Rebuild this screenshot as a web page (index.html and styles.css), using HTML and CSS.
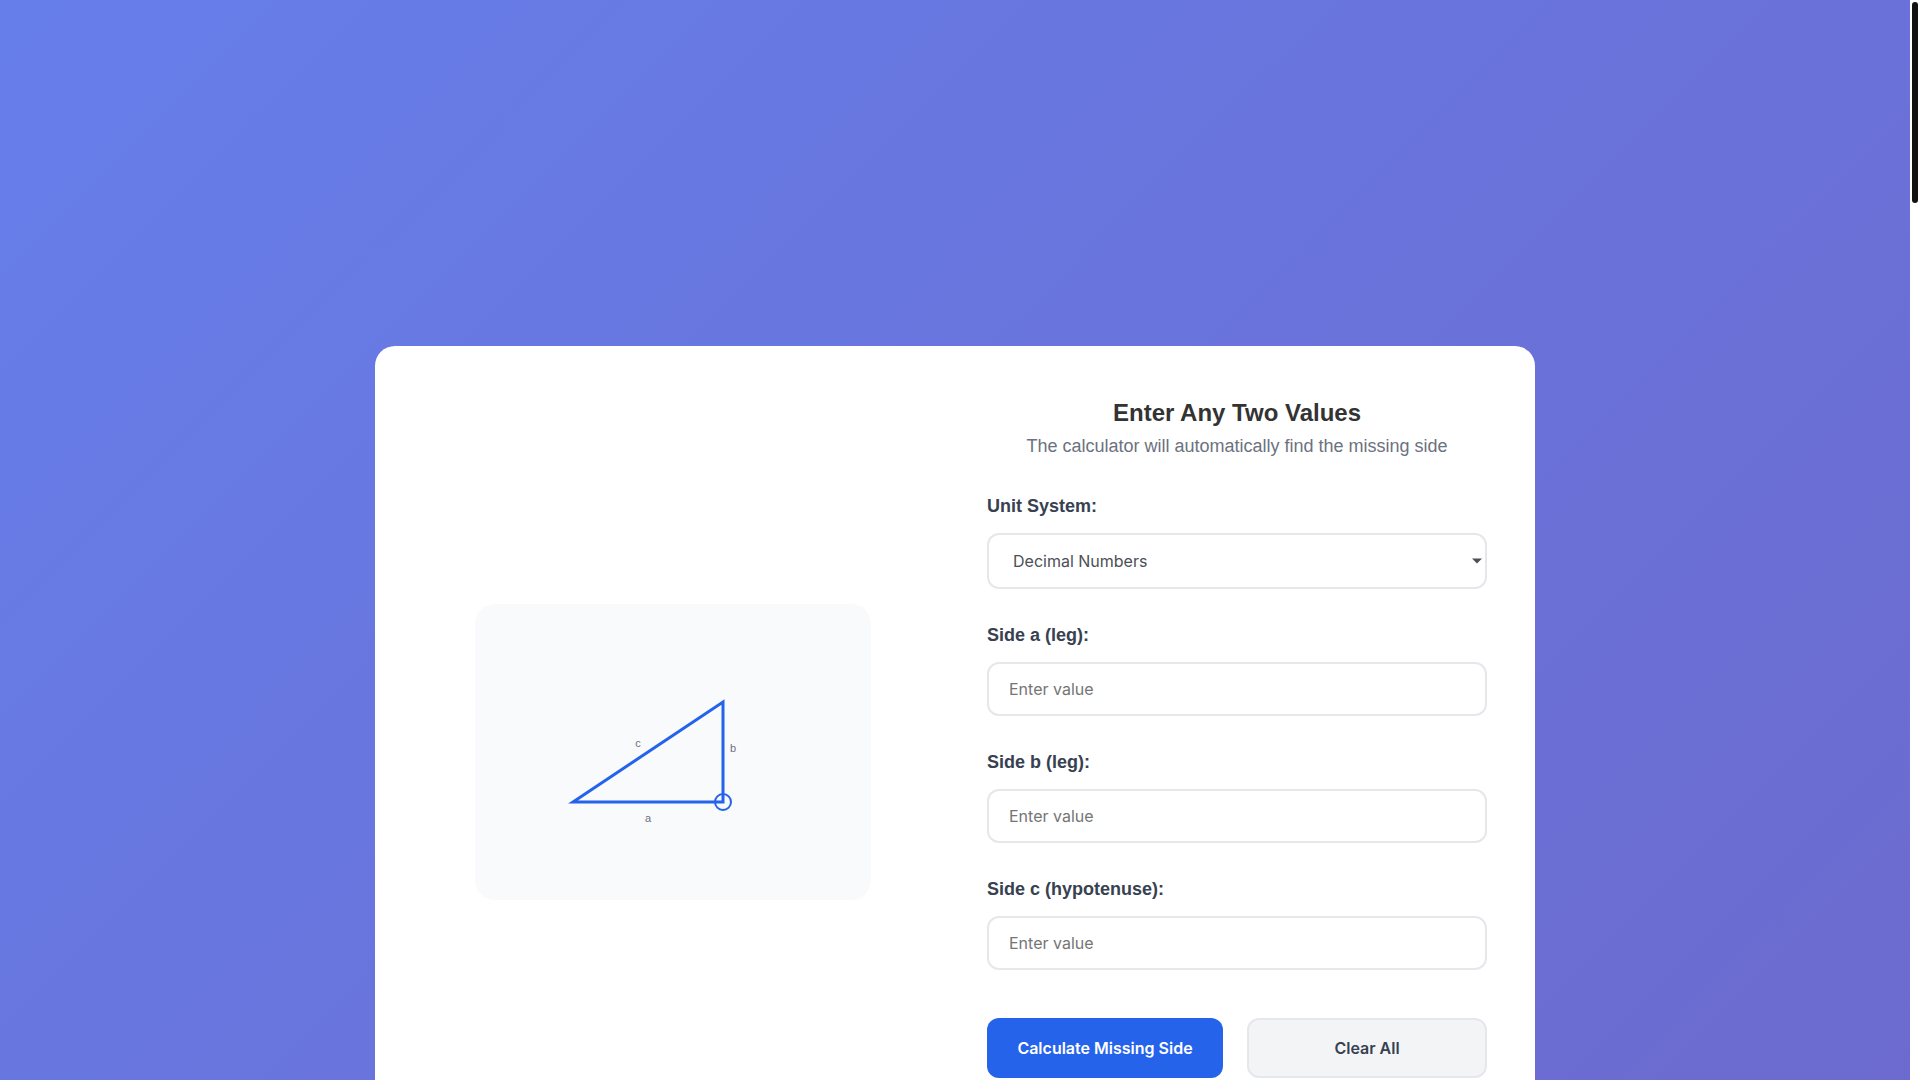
FILE: index.html
```html
<!DOCTYPE html>
<html lang="en">
<head>
    <meta charset="UTF-8">
    <meta name="viewport" content="width=device-width, initial-scale=1.0">
    <title>Right Triangle Calculator</title>
    <link rel="stylesheet" href="styles.css">
</head>
<body>
    <main class="page">
        <section class="calculator">
            <div class="visual">
                <div class="diagram">
                    <svg width="300" height="200" viewBox="0 0 300 200" role="img" aria-label="Right triangle">
                        <polygon class="triangle" points="50,150 200,150 200,50" />
                        <circle class="angle" cx="200" cy="150" r="8" />
                        <text class="side-label" x="125" y="170">a</text>
                        <text class="side-label" x="210" y="100">b</text>
                        <text class="side-label" x="115" y="95">c</text>
                    </svg>
                </div>
            </div>

            <form class="calc-form" id="calcForm">
                <div class="form-header">
                    <h2>Enter Any Two Values</h2>
                    <p>The calculator will automatically find the missing side</p>
                </div>

                <div class="input-group">
                    <label for="unitSystem">Unit System:</label>
                    <select id="unitSystem" name="unitSystem">
                        <option value="decimal">Decimal Numbers</option>
                    </select>
                </div>
                <div class="input-group">
                    <label for="sideA">Side a (leg):</label>
                    <input type="text" id="sideA" name="sideA" placeholder="Enter value">
                </div>
                <div class="input-group">
                    <label for="sideB">Side b (leg):</label>
                    <input type="text" id="sideB" name="sideB" placeholder="Enter value">
                </div>
                <div class="input-group">
                    <label for="sideC">Side c (hypotenuse):</label>
                    <input type="text" id="sideC" name="sideC" placeholder="Enter value">
                </div>

                <div class="button-group">
                    <button type="button" class="btn btn-primary">Calculate Missing Side</button>
                    <button type="reset" class="btn btn-secondary">Clear All</button>
                </div>
            </form>
        </section>
    </main>
    <div class="scroll-track"><div class="scroll-thumb"></div></div>
</body>
</html>
```

FILE: styles.css
```css
* {
    margin: 0;
    padding: 0;
    box-sizing: border-box;
}
body {
    height: 100vh;
    overflow: hidden;
    padding-right: 10px;
    font-family: "Liberation Sans", Arial, sans-serif;
    color: #333;
    background: linear-gradient(135deg, #667eea 0%, #764ba2 258%);
}
.page {
    max-width: 1200px;
    margin: 0 auto;
    padding: 346px 20px 0;
}

/* Calculator card */
.calculator {
    display: grid;
    grid-template-columns: 1fr 1fr;
    gap: 64px;
    align-items: center;
    padding: 48px;
    background: #fff;
    border-radius: 20px;
}
.visual {
    display: flex;
    justify-content: center;
}
.diagram {
    padding: 48px;
    background: #f8fafc;
    border-radius: 20px;
}
.diagram svg {
    display: block;
}
.triangle {
    fill: none;
    stroke: #2563eb;
    stroke-width: 3;
}
.angle {
    fill: none;
    stroke: #2563eb;
    stroke-width: 2;
}
.side-label {
    fill: #6b7280;
    font-size: 11px;
    text-anchor: middle;
}

/* Form */
.form-header {
    margin-bottom: 32px;
    text-align: center;
}
.form-header h2 {
    font-size: 24px;
    line-height: 38px;
}
.form-header p {
    font-size: 18px;
    line-height: 28px;
    color: #6b7280;
}
.input-group {
    margin-bottom: 32px;
}
.input-group label {
    display: block;
    margin-bottom: 12px;
    font-size: 18px;
    font-weight: 600;
    line-height: 29px;
    color: #374151;
}
.input-group input,
.input-group select {
    display: block;
    width: 100%;
    height: 54px;
    padding: 0 20px;
    border: 2px solid #e5e7eb;
    border-radius: 12px;
    background: #fff;
    font-family: Inter, sans-serif;
    font-size: 16px;
}
.input-group select {
    height: 56px;
    padding: 0 24px;
    color: #4b5056;
    appearance: none;
    background: #fff url("data:image/svg+xml,%3Csvg xmlns='http://www.w3.org/2000/svg' width='10' height='6' viewBox='0 0 10 6'%3E%3Cpath d='M0 .5h10L5 5.5z' fill='%234b5056'/%3E%3C/svg%3E") no-repeat right 3px center;
}
.input-group input:focus,
.input-group select:focus {
    outline: none;
    border-color: #2563eb;
}
.button-group {
    display: flex;
    gap: 24px;
    margin: 48px 0 32px;
}
.btn {
    flex: 1;
    height: 60px;
    padding: 0 24px;
    border: none;
    border-radius: 12px;
    font-family: Inter, sans-serif;
    font-size: 16px;
    font-weight: 600;
    white-space: nowrap;
    cursor: pointer;
}
.btn-primary {
    background: #2563eb;
    color: #fff;
}
.btn-secondary {
    background: #f3f4f6;
    color: #374151;
    border: 2px solid #e5e7eb;
}

/* Scroll bar */
.scroll-track {
    position: fixed;
    top: 0;
    right: 0;
    bottom: 0;
    width: 10px;
    padding: 2px;
    background: #fff;
}
.scroll-thumb {
    height: 201px;
    border-radius: 3px;
    background: #111;
}
```
